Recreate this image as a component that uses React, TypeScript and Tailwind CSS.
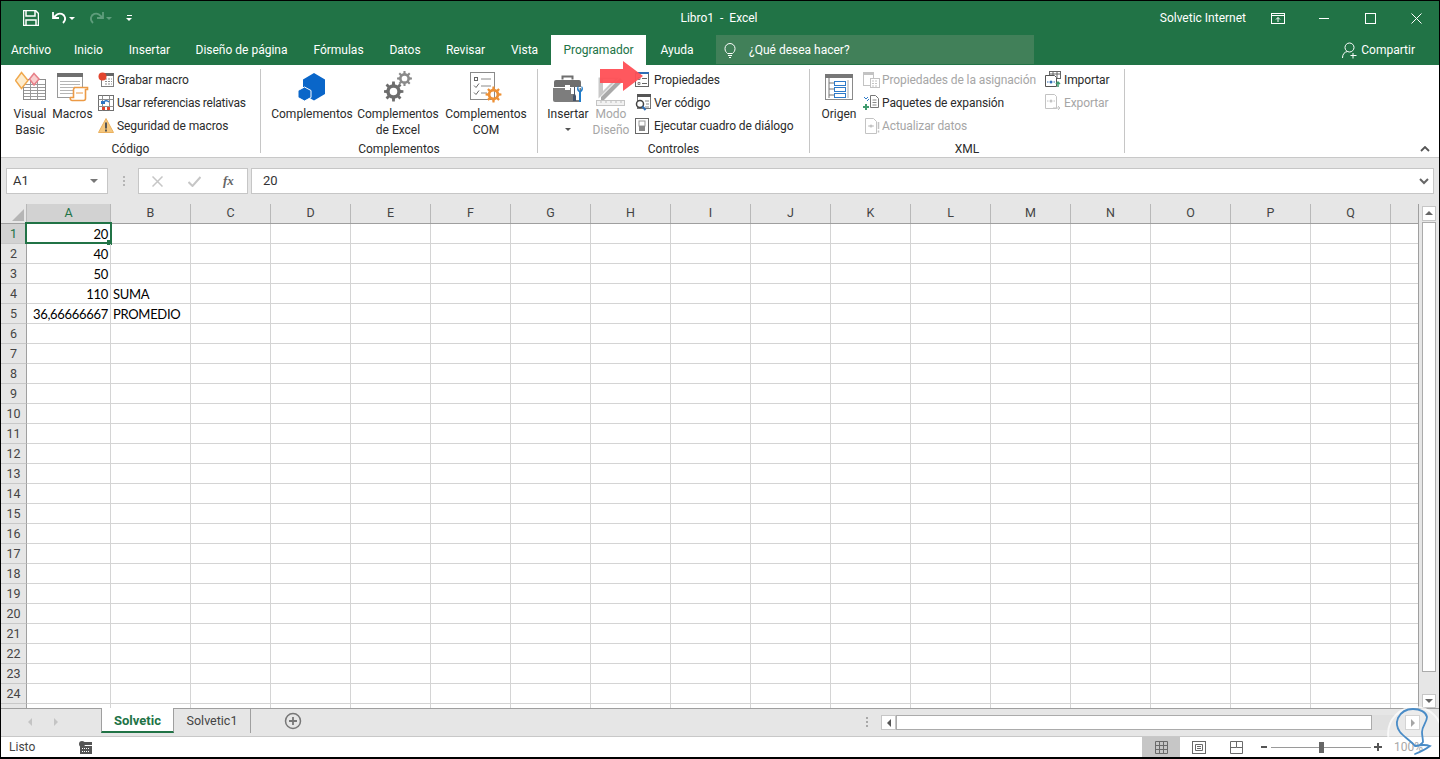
import type { ReactNode } from "react";

const COLUMNS = ["B", "C", "D", "E", "F", "G", "H", "I", "J", "K", "L", "M", "N", "O", "P", "Q"];
const ROWS = Array.from({ length: 25 }, (_, i) => i + 1);

const CELLS: Record<number, { a?: string; b?: string }> = {
  1: { a: "20" },
  2: { a: "40" },
  3: { a: "50" },
  4: { a: "110", b: "SUMA" },
  5: { a: "36,66666667", b: "PROMEDIO" },
};

const TABS = [
  { label: "Archivo", w: "w-[60px]" },
  { label: "Inicio", w: "w-[55px]" },
  { label: "Insertar", w: "w-[67px]" },
  { label: "Diseño de página", w: "w-[117px]" },
  { label: "Fórmulas", w: "w-[77px]" },
  { label: "Datos", w: "w-[56px]" },
  { label: "Revisar", w: "w-[65px]" },
  { label: "Vista", w: "w-[53px]" },
];

// teeth ring with a hole, used by the gear icons
function gear(cx: number, cy: number, r: number, teeth: number) {
  const pts: string[] = [];
  const inner = r * 0.72;
  const step = (Math.PI * 2) / teeth;
  for (let i = 0; i < teeth; i++) {
    const a = i * step;
    [
      [inner, a - step * 0.5],
      [inner, a - step * 0.27],
      [r, a - step * 0.17],
      [r, a + step * 0.17],
      [inner, a + step * 0.27],
    ].forEach(([rad, ang]) => {
      pts.push(`${(cx + rad * Math.cos(ang)).toFixed(2)} ${(cy + rad * Math.sin(ang)).toFixed(2)}`);
    });
  }
  const h = r * 0.38;
  return `M${pts.join("L")}Z M${cx - h} ${cy}a${h} ${h} 0 1 0 ${h * 2} 0a${h} ${h} 0 1 0 ${-h * 2} 0Z`;
}

function Ico({ w, h, children, className }: { w: number; h: number; children: ReactNode; className?: string }) {
  return (
    <svg width={w} height={h} viewBox={`0 0 ${w} ${h}`} fill="none" className={className}>
      {children}
    </svg>
  );
}

function TableLines({ x, y, w, h, color = "#8a8a8a" }: { x: number; y: number; w: number; h: number; color?: string }) {
  const d: string[] = [];
  for (let i = y + 3; i < y + h; i += 3) d.push(`M${x} ${i + 0.5}h${w}`);
  return <path d={d.join("")} stroke={color} strokeWidth="1" />;
}

const VisualBasicIcon = () => (
  <Ico w={31} h={29}>
    <rect x="8.5" y="8.5" width="22" height="20" fill="#fff" stroke="#8c8c8c" />
    <TableLines x={9} y={10} w={21} h={17} color="#9a9a9a" />
    <path d="M15.5 9v19M22.5 9v19" stroke="#9a9a9a" />
    <path d="M6.5 1.5 13 9.5 6.5 17.5 .5 9.5Z" fill="#fdeccd" stroke="#f0a94e" strokeWidth="1.5" />
    <path d="M19 2.5 24 8 19 14 14.5 8Z" fill="#f8cfcf" stroke="#e77f88" strokeWidth="1.5" />
  </Ico>
);

const MacrosIcon = () => (
  <Ico w={32} h={29}>
    <rect x=".5" y=".5" width="25" height="24" fill="#fff" stroke="#9a9a9a" />
    <rect x="0" y="0" width="26" height="4" fill="#6f6f6f" />
    <TableLines x={3} y={5} w={20} h={18} color="#b5b5b5" />
    <path d="M17.5 14.5h13v2h-2v9a2 2 0 0 1-2 2H15a2 2 0 0 1-1.500-3h3v-8Z" fill="#fff" stroke="#ec9a45" strokeWidth="1.6" />
    <path d="M19 20h7" stroke="#ec9a45" />
  </Ico>
);

const RecordIcon = () => (
  <Ico w={16} h={15}>
    <rect x="3.500" y="1.500" width="12" height="13" fill="#fff" stroke="#7f7f7f" />
    <rect x="3" y="1" width="13" height="3" fill="#666" />
    <path d="M7 7h7M7 9.500h7M7 12h7" stroke="#8f8f8f" strokeDasharray="2 1" />
    <circle cx="4.500" cy="4.500" r="4" fill="#e2452f" />
  </Ico>
);

const RelativeIcon = () => (
  <Ico w={16} h={16}>
    <rect x=".5" y=".5" width="15" height="15" fill="#fff" stroke="#6f6f6f" />
    <path d="M.5 4.500h15M.5 11.500h15M4.500 .5v15M11.500 .5v15" stroke="#8f8f8f" />
    <path d="M5 8a3.500 3.500 0 0 1 6-1" stroke="#2f74c4" strokeWidth="1.5" />
    <path d="M3 6h4v3H3Z" fill="#2f74c4" />
    <rect x="4" y="12" width="3" height="3" fill="#e2452f" />
    <rect x="9" y="12" width="3" height="3" fill="#e2452f" />
  </Ico>
);

const WarnIcon = () => (
  <Ico w={16} h={15}>
    <path d="M8 .5 15.500 14.500H.5Z" fill="#f5c77e" stroke="#eab160" />
    <path d="M7 4.500h2v6H7ZM7 11.500h2v2H7Z" fill="#555" />
  </Ico>
);

const AddinIcon = () => (
  <Ico w={28} h={28}>
    <path d="M16 0 27 6.500V21L16 27.500 9 23.500V18L5 16 V6.500Z" fill="#0a66c9" />
    <path d="M6.500 14 13 17.500V24.500L6.500 28 0 24.500V17.500Z" fill="#0a66c9" stroke="#fff" strokeWidth="1" />
  </Ico>
);

const GearsIcon = () => (
  <Ico w={28} h={31}>
    <path fillRule="evenodd" d={gear(9.5, 20.5, 10, 8)} fill="#6d6d6d" />
    <path fillRule="evenodd" d={gear(20.5, 7.5, 7.500, 8)} fill="#8a8a8a" />
  </Ico>
);

const ComIcon = () => (
  <Ico w={32} h={31}>
    <rect x=".5" y=".5" width="24" height="27" fill="#fff" stroke="#8a8a8a" />
    <rect x="4.500" y="5.500" width="3" height="3" stroke="#666" />
    <path d="M4 13.500l2 2 3-4M4 20.500l2 2 3-4" stroke="#666" />
    <path d="M11 7h10M11 14h10M11 21h6" stroke="#8a8a8a" />
    <path fillRule="evenodd" d={gear(23.500, 22.500, 8, 8)} fill="#ed9035" />
  </Ico>
);

const ToolboxIcon = () => (
  <Ico w={31} h={29}>
    <path d="M9.500 5.500v-3h10v3" stroke="#6f6f6f" strokeWidth="2" />
    <path d="M1 8a2 2 0 0 1 2-2h23a2 2 0 0 1 2 2v5H1Z" fill="#6f6f6f" />
    <path d="M0 14h28v12a2 2 0 0 1-2 2H2a2 2 0 0 1-2-2Z" fill="#7d7d7d" />
    <rect x="12" y="11" width="5" height="5" fill="#fff" />
    <path d="M20.500 14v6M24 14v12" stroke="#fff" strokeWidth="5" />
    <path d="M21 13v7l-1 2v5h3v-5l-1-2v-7" fill="#44546a" />
    <path d="M25.500 12v3l1.500 2 1.500-2v-3c2 1 2 5-.5 6v10h-2V18c-2.500-1-2.500-5-.5-6Z" fill="#1f7bc9" />
  </Ico>
);

const DesignIcon = () => (
  <Ico w={30} h={32}>
    <path d="M2.500 3.500v21l21-21Z" fill="#c9c9c9" />
    <path d="M7 5v12l12-12Z" fill="#fff" />
    <path d="M5 23 24 4l3 3L8 26H5Z" fill="#a9a9a9" />
    <rect x="0.500" y="26.500" width="28" height="5" fill="#f2f2f2" stroke="#c4c4c4" />
    <path d="M5 27v2M10 27v2M15 27v2M20 27v2M25 27v2" stroke="#bbb" />
  </Ico>
);

const PropsIcon = () => (
  <Ico w={15} h={15}>
    <rect x=".5" y=".5" width="13" height="14" fill="#fff" stroke="#666" />
    <rect x="0" y="0" width="14" height="2" fill="#2f6db5" />
    <path d="M3 5.500h2v2H3ZM3 10.500h2v2H3Z" stroke="#666" strokeWidth=".8" />
    <path d="M7 6.500h5M7 11.500h5" stroke="#666" />
  </Ico>
);

const CodeIcon = () => (
  <Ico w={17} h={17}>
    <rect x="2.500" y=".5" width="13" height="14" fill="#fff" stroke="#777" />
    <rect x="2" y="0" width="14" height="3" fill="#555" />
    <path d="M10 7h4M11 10h3M10 13h4" stroke="#888" />
    <circle cx="5" cy="10" r="3.500" fill="#fff" stroke="#444" strokeWidth="1.500" />
    <path d="M7.500 12.500l3 3.500" stroke="#2f6db5" strokeWidth="2" />
  </Ico>
);

const DialogIcon = () => (
  <Ico w={15} h={16}>
    <rect x=".5" y=".5" width="13" height="15" fill="#fff" stroke="#666" />
    <rect x="4" y="3" width="6" height="5" fill="#fff" stroke="#999" />
    <rect x="4" y="8" width="6" height="5" fill="#8a8a8a" />
  </Ico>
);

const OriginIcon = () => (
  <Ico w={28} h={26}>
    <rect x=".5" y=".5" width="27" height="25" fill="#fff" stroke="#8a8a8a" />
    <rect x="0" y="0" width="28" height="4" fill="#777" />
    <path d="M4 4v20M4 9h5M4 15h5M4 21h5" stroke="#777" />
    <rect x="9.500" y="7.500" width="11" height="4" fill="#fff" stroke="#2f7bc9" />
    <rect x="9.500" y="13.500" width="11" height="4" fill="#fff" stroke="#2f7bc9" />
    <rect x="9.500" y="19.500" width="11" height="4" fill="#fff" stroke="#2f7bc9" />
    <path d="M23 6v18" stroke="#aaa" />
  </Ico>
);

const MapPropsIcon = () => (
  <Ico w={17} h={16} className="opacity-50">
    <rect x=".5" y=".5" width="10" height="13" fill="#fff" stroke="#888" />
    <rect x="0" y="0" width="11" height="3" fill="#888" />
    <rect x="7.500" y="6.500" width="9" height="9" fill="#fff" stroke="#888" />
    <path d="M9 9h6M9 11.500h6M9 14h6" stroke="#888" strokeDasharray="2 1" />
  </Ico>
);

const PackIcon = () => (
  <Ico w={16} h={17}>
    <path d="M7.500 1.500h5l3 3v9h-8Z" fill="#fff" stroke="#777" />
    <path d="M9.500 6h4M9.500 8.500h4M9.500 11h4" stroke="#888" />
    <path d="M1 3l2 2 2-2M6 5l-2 2" stroke="#2f7bc9" />
    <path d="M3 10v6M0 13h6" stroke="#3f9a6e" strokeWidth="2" />
  </Ico>
);

const RefreshDataIcon = () => (
  <Ico w={17} h={16} className="opacity-50">
    <path d="M2.500 .5h8l3 3v12h-11Z" fill="#fff" stroke="#888" />
    <path d="M5 8h2M9 8h2" stroke="#888" />
    <circle cx="8" cy="8" r="1.500" fill="#888" />
    <path d="M15.500 4v7M15.500 12.500v2" stroke="#888" strokeWidth="1.500" />
  </Ico>
);

const ImportIcon = () => (
  <Ico w={16} h={17}>
    <rect x="4.500" y=".5" width="11" height="7" fill="#fff" stroke="#666" />
    <path d="M4.500 3h11M8 0v7M12 0v7" stroke="#666" />
    <path d="M.5 4.500h9l2 2v9h-11Z" fill="#fff" stroke="#555" />
    <circle cx="6" cy="11" r="1.500" fill="#2f6db5" />
    <path d="M2 11h1.500M8.500 11H10" stroke="#2f6db5" />
    <path d="M13 16v-5M11 13l2-2 2 2" stroke="#3f9a6e" strokeWidth="1.500" />
  </Ico>
);

const ExportIcon = () => (
  <Ico w={16} h={17} className="opacity-50">
    <path d="M.5 .5h9l2 2v12h-11Z" fill="#fff" stroke="#888" />
    <circle cx="6" cy="7" r="1.500" fill="#888" />
    <path d="M2 7h1.500M8.500 7H10" stroke="#888" />
    <path d="M8 14h7M13 12l2 2-2 2" stroke="#888" />
  </Ico>
);

function LargeButton({ w, icon, lines, disabled, iconTop = 0, caret }: { w: string; icon: ReactNode; lines: string[]; disabled?: boolean; iconTop?: number; caret?: boolean }) {
  return (
    <div className={`${w} flex flex-col items-center ${disabled ? "text-[#a6a6a6]" : ""}`}>
      <div className="h-[37px] flex justify-center items-start" style={{ paddingTop: iconTop }}>
        {icon}
      </div>
      {lines.map((l) => (
        <div key={l} className="h-[16px] leading-[16px] whitespace-nowrap">
          {l}
        </div>
      ))}
      {caret && <div className="mt-[6px] w-0 h-0 border-x-[3px] border-x-transparent border-t-[3px] border-t-[#555]" />}
    </div>
  );
}

function SmallItem({ icon, label, disabled, narrow }: { icon: ReactNode; label: string; disabled?: boolean; narrow?: boolean }) {
  return (
    <div className={`h-[23px] flex items-center whitespace-nowrap ${narrow ? "tracking-[-0.25px]" : "tracking-[-0.1px]"} ${disabled ? "text-[#a6a6a6]" : ""}`}>
      <div className="w-[19px] flex items-center">{icon}</div>
      {label}
    </div>
  );
}

function Group({ w, label, children }: { w: string; label: string; children: ReactNode }) {
  return (
    <div className={`${w} h-[84px] flex flex-col border-r border-[#c6c6c6] shrink-0`}>
      <div className="h-[72px] shrink-0 flex">{children}</div>
      <div className="h-[16px] shrink-0 leading-[16px] text-center">{label}</div>
    </div>
  );
}

function Ribbon() {
  return (
    <div className="relative h-[93px] shrink-0 bg-white border-b border-[#c8c8c8] pt-[4px] flex text-[12px] text-[#2b2b2b]">
      <Group w="w-[260px]" label="Código">
        <LargeButton w="w-[44px] ml-[7px]" icon={<VisualBasicIcon />} iconTop={2} lines={["Visual", "Basic"]} />
        <LargeButton w="w-[41px]" icon={<MacrosIcon />} iconTop={4} lines={["Macros"]} />
        <div className="ml-[5px] -mt-px">
          <SmallItem icon={<RecordIcon />} label="Grabar macro" />
          <SmallItem icon={<RelativeIcon />} label="Usar referencias relativas" narrow />
          <SmallItem icon={<WarnIcon />} label="Seguridad de macros" />
        </div>
      </Group>
      <Group w="w-[277px]" label="Complementos">
        <LargeButton w="w-[86px] ml-[8px]" icon={<AddinIcon />} iconTop={4} lines={["Complementos"]} />
        <LargeButton w="w-[86px]" icon={<GearsIcon />} iconTop={2} lines={["Complementos", "de Excel"]} />
        <LargeButton w="w-[86px] ml-[2px]" icon={<ComIcon />} iconTop={3} lines={["Complementos", "COM"]} />
      </Group>
      <Group w="w-[272px]" label="Controles">
        <LargeButton w="w-[40px] ml-[10px]" icon={<ToolboxIcon />} iconTop={5} lines={["Insertar"]} caret />
        <LargeButton w="w-[36px] ml-[5px]" icon={<DesignIcon />} iconTop={5} lines={["Modo", "Diseño"]} disabled />
        <div className="ml-[6px] -mt-px">
          <SmallItem icon={<PropsIcon />} label="Propiedades" />
          <SmallItem icon={<CodeIcon />} label="Ver código" />
          <SmallItem icon={<DialogIcon />} label="Ejecutar cuadro de diálogo" />
        </div>
      </Group>
      <Group w="w-[315px]" label="XML">
        <LargeButton w="w-[36px] ml-[11px]" icon={<OriginIcon />} iconTop={5} lines={["Origen"]} />
        <div className="ml-[6px] w-[182px] -mt-px">
          <SmallItem icon={<MapPropsIcon />} label="Propiedades de la asignación" disabled />
          <SmallItem icon={<PackIcon />} label="Paquetes de expansión" />
          <SmallItem icon={<RefreshDataIcon />} label="Actualizar datos" disabled />
        </div>
        <div className="-mt-px">
          <SmallItem icon={<ImportIcon />} label="Importar" />
          <SmallItem icon={<ExportIcon />} label="Exportar" disabled />
        </div>
      </Group>
      <svg width="10" height="6" viewBox="0 0 10 6" className="absolute left-[1419px] top-[81px]">
        <path d="M1 5l4-4 4 4" stroke="#555" strokeWidth="1.800" fill="none" />
      </svg>
    </div>
  );
}

function TitleBar() {
  return (
    <div className="h-[34px] shrink-0 grid grid-cols-[1fr_auto_1fr] items-center text-[12px] text-white">
      <div className="flex items-center pl-[22px]">
        <Ico w={16} h={16}>
          <path d="M.5 .5h12l3 3v12H.5Z" stroke="#fff" strokeWidth="1.500" />
          <path d="M3 1v5h9V1" stroke="#fff" strokeWidth="1.500" />
          <path d="M3 16v-6h10v6" stroke="#fff" strokeWidth="1.500" />
        </Ico>
        <Ico w={15} h={14} className="ml-[13px]">
          <path d="M1 1v6h6M1.500 6.500 5 3.500c3-2 7-.500 8 3 .5 2-.5 4-2 5.500" stroke="#fff" strokeWidth="1.800" />
        </Ico>
        <div className="ml-[2px] w-0 h-0 border-x-[3px] border-x-transparent border-t-[3px] border-t-white" />
        <Ico w={15} h={14} className="ml-[14px]">
          <path d="M14 1v6H8M13.500 6.500 10 3.500c-3-2-7-.500-8 3-.5 2 .5 4 2 5.500" stroke="#5f9d7c" strokeWidth="1.800" />
        </Ico>
        <div className="ml-[2px] w-0 h-0 border-x-[3px] border-x-transparent border-t-[3px] border-t-[#5f9d7c]" />
        <div className="ml-[14px] flex flex-col items-center gap-[2px]">
          <div className="w-[5px] h-px bg-white" />
          <div className="w-0 h-0 border-x-[3px] border-x-transparent border-t-[3px] border-t-white" />
        </div>
      </div>
      <div className="whitespace-pre pr-[2px]">Libro1  -  Excel</div>
      <div className="flex items-center justify-end">
        <span>Solvetic Internet</span>
        <Ico w={14} h={11} className="ml-[25px]">
          <rect x=".5" y=".5" width="13" height="10" stroke="#fff" />
          <path d="M0 2.500h14M7 9V4.500M5 6.500l2-2 2 2" stroke="#fff" />
        </Ico>
        <Ico w={11} h={11} className="ml-[34px]">
          <path d="M0 5.500h10" stroke="#fff" />
        </Ico>
        <Ico w={11} h={11} className="ml-[35px]">
          <rect x=".5" y=".5" width="10" height="10" stroke="#fff" />
        </Ico>
        <Ico w={11} h={11} className="ml-[35px] mr-[17px]">
          <path d="M.5 .5l10 10M10.500 .5l-10 10" stroke="#fff" />
        </Ico>
      </div>
    </div>
  );
}

function TabBar() {
  return (
    <div className="h-[30px] shrink-0 flex items-stretch text-[12px] text-white">
      {TABS.map((t) => (
        <div key={t.label} className={`${t.w} flex items-center justify-center whitespace-nowrap`}>
          {t.label}
        </div>
      ))}
      <div className="w-[95px] bg-white text-[#217346] flex items-center justify-center">Programador</div>
      <div className="w-[62px] flex items-center justify-center">Ayuda</div>
      <div className="ml-[8px] w-[318px] h-[29px] bg-[#418059] flex items-center pl-[8px]">
        <Ico w={12} h={16}>
          <path d="M3.500 11.500C2 10 1 9 1 6.500a5 5 0 0 1 10 0C11 9 10 10 8.500 11.500ZM4 13.500h4M5 15.500h2" stroke="#fff" />
        </Ico>
        <span className="ml-[13px]">¿Qué desea hacer?</span>
      </div>
      <div className="flex-1 flex items-center justify-end pr-[24px]">
        <Ico w={16} h={17}>
          <circle cx="7.500" cy="5.500" r="4.500" stroke="#fff" />
          <path d="M.5 16c0-4 2-6 5-6.500M11 11v5.500M8.500 13.500h6" stroke="#fff" />
        </Ico>
        <span className="ml-[3px]">Compartir</span>
      </div>
    </div>
  );
}

function FormulaBar() {
  return (
    <div className="h-[46px] shrink-0 bg-[#e6e6e6] flex items-start pt-[10px] pl-[5px] pr-[5px] text-[13px] text-[#333]">
      <div className="w-[102px] h-[26px] bg-white border border-[#c6c6c6] flex items-center justify-between pl-[6px] pr-[9px]">
        <span>A1</span>
        <div className="w-0 h-0 border-x-[4px] border-x-transparent border-t-[4px] border-t-[#777]" />
      </div>
      <div className="ml-[15px] h-[26px] flex flex-col justify-center gap-[2px]">
        <div className="w-[2px] h-[2px] bg-[#b5b5b5]" />
        <div className="w-[2px] h-[2px] bg-[#b5b5b5]" />
        <div className="w-[2px] h-[2px] bg-[#b5b5b5]" />
      </div>
      <div className="ml-[13px] w-[110px] h-[26px] bg-white border border-[#c6c6c6] flex items-center">
        <Ico w={11} h={11} className="ml-[13px]">
          <path d="M.5 .5l10 10M10.500 .5l-10 10" stroke="#c6c6c6" strokeWidth="1.500" />
        </Ico>
        <Ico w={13} h={11} className="ml-[25px]">
          <path d="M.5 6l4 4L12.500 1" stroke="#c6c6c6" strokeWidth="2" />
        </Ico>
        <span className="ml-[22px] font-['Liberation_Serif'] italic text-[13px] text-[#666] font-bold">fx</span>
      </div>
      <div className="ml-[3px] flex-1 h-[26px] bg-white border border-[#c6c6c6] flex items-center justify-between pl-[11px] pr-[3px]">
        <span>20</span>
        <Ico w={10} h={7} className="mr-[1px]">
          <path d="M1 1l4 4 4-4" stroke="#666" strokeWidth="2" />
        </Ico>
      </div>
    </div>
  );
}

function ColumnHeader() {
  return (
    <div className="h-[20px] shrink-0 flex bg-[#e6e6e6] border-b border-[#9f9f9f] text-[12.5px] text-[#444]">
      <div className="w-[26px] relative border-r border-[#b8b8b8]">
        <div className="absolute right-[2px] bottom-[2px] w-0 h-0 border-l-[12px] border-l-transparent border-b-[12px] border-b-[#b5b5b5]" />
      </div>
      <div className="w-[84px] bg-[#d2d2d2] text-[#217346] flex items-center justify-center border-r border-[#b8b8b8]">A</div>
      {COLUMNS.map((c) => (
        <div key={c} className="w-[80px] flex items-center justify-center border-r border-[#b8b8b8]">
          {c}
        </div>
      ))}
      <div className="flex-1" />
    </div>
  );
}

function Row({ n }: { n: number }) {
  const cell = CELLS[n];
  const selected = n === 1;
  return (
    <div className="h-[20px] shrink-0 flex font-[Lato] text-[13px] tracking-[-0.3px]">
      <div
        className={`w-[26px] shrink-0 pt-px flex items-center justify-center font-['Roboto'] tracking-normal text-[12.5px] border-r border-b border-r-[#9f9f9f] border-b-[#c8c8c8] ${
          selected ? "bg-[#d2d2d2] text-[#217346]" : "bg-[#e6e6e6] text-[#444]"
        }`}
      >
        {n < 25 ? n : ""}
      </div>
      <div className="relative w-[84px] shrink-0 pt-[3px] border-r border-b border-[#d4d4d4] flex items-center justify-end pr-[2px] text-black">
        {cell?.a}
        {selected && (
          <>
            <div className="absolute -left-[2px] -top-[2px] w-[87px] h-[22px] border-2 border-[#217346]" />
            <div className="absolute -right-[2px] -bottom-[2px] w-[5px] h-[5px] bg-[#217346]" />
          </>
        )}
      </div>
      <div className="w-[80px] shrink-0 pt-[3px] border-r border-b border-[#d4d4d4] flex items-center pl-[2px] text-black">{cell?.b}</div>
      {COLUMNS.slice(1).map((c) => (
        <div key={c} className="w-[80px] shrink-0 border-r border-b border-[#d4d4d4]" />
      ))}
      <div className="flex-1 border-b border-[#d4d4d4]" />
    </div>
  );
}

function VScroll() {
  return (
    <div className="w-[21px] shrink-0 bg-[#e6e6e6] flex flex-col pl-[3px] pr-[3px] pt-[2px] border-l border-[#9f9f9f]">
      <div className="h-[15px] bg-white border border-[#c6c6c6] flex items-center justify-center">
        <div className="w-0 h-0 border-x-[4px] border-x-transparent border-b-[4px] border-b-[#666]" />
      </div>
      <div className="mt-[1px] h-[451px] bg-white border border-[#ababab]" />
      <div className="mt-[22px] h-[14px] bg-white border border-[#c6c6c6] flex items-center justify-center">
        <div className="w-0 h-0 border-x-[4px] border-x-transparent border-t-[4px] border-t-[#666]" />
      </div>
    </div>
  );
}

function SheetBar() {
  return (
    <div className="h-[28px] shrink-0 bg-[#e6e6e6] border-t border-[#9f9f9f] flex text-[12.5px] text-[#444]">
      <div className="w-[100px] shrink-0 flex items-center pl-[27px] gap-[22px] h-[25px]">
        <div className="w-0 h-0 border-y-[4px] border-y-transparent border-r-[4px] border-r-[#c4c4c4]" />
        <div className="w-0 h-0 border-y-[4px] border-y-transparent border-l-[4px] border-l-[#c4c4c4]" />
      </div>
      <div className="w-[73px] h-[25px] -mt-px pt-[2px] bg-white border-x border-[#9f9f9f] border-b-2 border-b-[#217346] flex items-center justify-center font-bold text-[13px] text-[#217346]">
        Solvetic
      </div>
      <div className="w-[77px] h-[24px] pt-px flex items-center justify-center border-r border-[#9f9f9f]">Solvetic1</div>
      <Ico w={18} h={18} className="ml-[33px] mt-[3px]">
        <circle cx="9" cy="9" r="7.500" stroke="#777" strokeWidth="1.500" />
        <path d="M9 5v8M5 9h8" stroke="#777" strokeWidth="1.800" />
      </Ico>
      <div className="ml-[564px] h-[25px] flex flex-col justify-center gap-[2px]">
        <div className="w-[2px] h-[2px] bg-[#a8a8a8]" />
        <div className="w-[2px] h-[2px] bg-[#a8a8a8]" />
        <div className="w-[2px] h-[2px] bg-[#a8a8a8]" />
      </div>
      <div className="ml-[13px] mt-[6px] w-[539px] h-[15px] flex bg-[#e0e0e0]">
        <div className="w-[15px] h-full bg-white border border-[#c6c6c6] flex items-center justify-center">
          <div className="w-0 h-0 border-y-[4px] border-y-transparent border-r-[4px] border-r-[#555]" />
        </div>
        <div className="w-[476px] h-full bg-white border border-[#ababab]" />
        <div className="ml-auto w-[15px] h-full bg-white border border-[#c6c6c6] flex items-center justify-center">
          <div className="w-0 h-0 border-y-[4px] border-y-transparent border-l-[4px] border-l-[#888]" />
        </div>
      </div>
    </div>
  );
}

function StatusBar() {
  return (
    <div className="relative h-[21px] shrink-0 bg-white border-t border-[#c8c8c8] flex items-center text-[12px] text-[#444]">
      <span className="w-[78px] pl-[8px]">Listo</span>
      <Ico w={14} h={13}>
        <circle cx="3" cy="3" r="3" fill="#555" />
        <rect x="4" y="1" width="9" height="3" fill="#555" />
        <rect x="1" y="5" width="12" height="8" fill="#555" />
        <path d="M3 7.500h8M3 10.500h8" stroke="#fff" strokeDasharray="1 1" />
      </Ico>
      <div className="ml-[1049px] w-[38px] h-full bg-[#c6c6c6] flex items-center justify-center">
        <Ico w={13} h={13}>
          <path d="M.5 .5h12v12H.5ZM4.500 .5v12M8.500 .5v12M.5 4.500h12M.5 8.500h12" stroke="#6a6a6a" />
        </Ico>
      </div>
      <Ico w={14} h={13} className="ml-[12px]">
        <rect x=".5" y=".5" width="13" height="12" stroke="#6a6a6a" />
        <path d="M3.500 3.500h7v6h-7ZM5 5.500h4M5 7.500h4" stroke="#6a6a6a" />
      </Ico>
      <Ico w={13} h={13} className="ml-[24px]">
        <path d="M.5 .5h12v12H.5ZM6.500 .5v6H.5M6.500 6.500h6" stroke="#6a6a6a" />
      </Ico>
      <div className="ml-[18px] w-[6px] h-[2px] bg-[#555]" />
      <div className="relative ml-[4px] w-[100px] h-px bg-[#9a9a9a]">
        <div className="absolute left-[48px] -top-[5px] w-[5px] h-[11px] bg-[#666]" />
      </div>
      <Ico w={8} h={8} className="ml-[3px]">
        <path d="M4 0v8M0 4h8" stroke="#555" strokeWidth="2" />
      </Ico>
      <span className="ml-[12px] text-[#8a8a8a]">100%</span>
    </div>
  );
}

export default function App() {
  return (
    <div className="relative w-[1440px] h-[759px] overflow-hidden flex flex-col bg-[#217346] border-x border-t border-b-2 border-black font-['Roboto',sans-serif]">
      <TitleBar />
      <TabBar />
      <Ribbon />
      <FormulaBar />
      <div className="flex h-[504px] shrink-0 bg-white">
        <div className="flex-1 flex flex-col overflow-hidden">
          <ColumnHeader />
          {ROWS.map((n) => (
            <Row key={n} n={n} />
          ))}
        </div>
        <VScroll />
      </div>
      <SheetBar />
      <StatusBar />

      {/* flecha roja sobre la cinta */}
      <svg width="46" height="32" viewBox="0 0 46 32" className="absolute left-[598px] top-[59px]">
        <path d="M1 9h23V1l20 15-20 15v-8H1Z" fill="#ff4f55" fillOpacity=".95" />
      </svg>

      {/* marca de agua */}
      <svg width="60" height="60" viewBox="0 0 60 60" className="absolute left-[1379px] top-[698px]">
        <circle cx="35" cy="35" r="27" fill="#fff" fillOpacity=".25" stroke="#fff" strokeOpacity=".7" strokeWidth="2" />
        <path
          d="M20 33c-3-4-4-9-2-14 3-6 9-9 15-9 7 0 13 3 14 8 0 5-5 9-5 15 0 4 1 7 1 10-2 3-4 4-7 4M20 33c4 5 11 9 15 14 5-1 10-2 15 0-4 3-10 6-15 8"
          fill="none"
          stroke="#4a8cc7"
          strokeWidth="1.800"
          strokeLinecap="round"
        />
      </svg>
    </div>
  );
}
